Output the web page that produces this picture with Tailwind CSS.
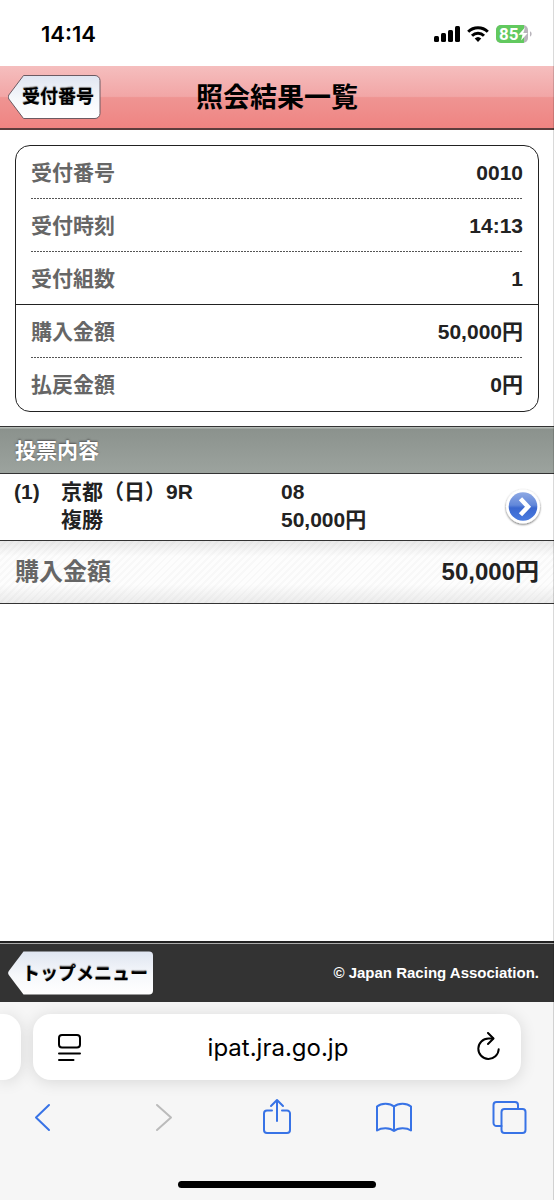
<!DOCTYPE html>
<html lang="ja">
<head>
<meta charset="utf-8">
<meta name="viewport" content="width=device-width, initial-scale=1">
<title>照会結果一覧</title>
<script src="https://cdn.jsdelivr.net/npm/@tailwindcss/browser@4"></script>
</head>
<body class="min-h-screen flex flex-col bg-white text-[#222] font-bold font-['Liberation_Sans','Noto_Sans_CJK_JP',sans-serif]">

<!-- Hairline down the right edge of the window -->
<div class="fixed inset-y-0 right-0 z-10 w-px bg-black/15"></div>

<!-- Status bar -->
<div class="h-[66px] shrink-0 flex items-center justify-between pl-[41px] pr-[22px] pt-[2px] text-black font-['Inter',sans-serif]">
  <time class="text-[22px] leading-none font-semibold">14:14</time>
  <div class="flex items-center gap-[7px]">
    <svg class="w-[26px] h-4" viewBox="0 0 26 16" role="img" aria-label="電波"><rect x="0" y="10" width="5" height="6" rx="1.5"/><rect x="7" y="7" width="5" height="9" rx="1.5"/><rect x="14" y="4" width="5" height="12" rx="1.5"/><rect x="21" y="0" width="5" height="16" rx="1.5"/></svg>
    <svg class="w-[22px] h-4" viewBox="0 0 22 16" role="img" aria-label="Wi-Fi"><g fill="none" stroke="#000" stroke-width="3"><path d="M1.2 5.7a14 14 0 0 1 19.6 0"/><path d="M5 9.8a8.6 8.6 0 0 1 12 0"/></g><path d="M11 16l-3.3-3.4a4.8 4.8 0 0 1 6.6 0z"/></svg>
    <svg class="w-9 h-[18px]" viewBox="0 0 36 18" role="img" aria-label="バッテリー 85%"><defs><clipPath id="cell"><rect width="32" height="18" rx="5"/></clipPath></defs><g clip-path="url(#cell)"><rect width="32" height="18" fill="#b9b5bc"/><rect width="28" height="18" fill="#62c95f"/></g><path d="M34 6.3a3 3 0 0 1 0 5.4z" fill="#b9b5bc"/><text class="font-['Roboto',sans-serif]" x="3" y="14.8" font-size="17" font-weight="700" fill="#fff">85</text><path d="M29 2.500L22.500 9.800h4l-1.400 5.700 6.600-7.600h-4.200z" fill="#fff"/></svg>
  </div>
</div>

<!-- Title bar -->
<header class="relative h-16 shrink-0 flex items-center px-2 border-b-2 border-[#5c3d3d] bg-[linear-gradient(#f5bebe_0%,#f2a6a6_49%,#ef9492_51%,#ef8482_100%)]">
  <button type="button" class="relative w-[93px] h-11 pl-[14px] pr-2 text-lg leading-none text-black whitespace-nowrap [text-shadow:0_-1px_1px_#777]">
    <svg class="absolute inset-0 w-full h-full" viewBox="0 0 93 44" aria-hidden="true"><defs><linearGradient id="tagA" x2="0" y2="1"><stop stop-color="#dfe5f1"/><stop offset=".55" stop-color="#f6f8fb"/><stop offset="1" stop-color="#fff"/></linearGradient></defs><path d="M15.500 .5H87a5 5 0 0 1 5 5V38.500a5 5 0 0 1-5 5H15.500L.8 24q-1.300-2 0-4z" fill="url(#tagA)" stroke="#6b5a62"/></svg>
    <span class="relative">受付番号</span>
  </button>
  <h1 class="absolute inset-x-0 pt-[2px] text-center text-[27px] leading-none text-black pointer-events-none">照会結果一覧</h1>
</header>

<main class="flex-1">
  <!-- Receipt summary -->
  <dl class="mx-[15px] mt-[15px] border border-[#222] rounded-[15px] text-[21px] leading-none [&_dt]:text-[#666]">
    <div class="mx-[15px] h-[53px] flex items-center justify-between bg-[repeating-linear-gradient(90deg,#555_0_2px,#fff_2px_3px)] bg-[length:100%_1px] bg-bottom bg-no-repeat"><dt>受付番号</dt><dd>0010</dd></div>
    <div class="mx-[15px] h-[53px] flex items-center justify-between bg-[repeating-linear-gradient(90deg,#555_0_2px,#fff_2px_3px)] bg-[length:100%_1px] bg-bottom bg-no-repeat"><dt>受付時刻</dt><dd>14:13</dd></div>
    <div class="px-[15px] h-[53px] flex items-center justify-between border-b border-[#222]"><dt>受付組数</dt><dd>1</dd></div>
    <div class="mx-[15px] h-[53px] flex items-center justify-between bg-[repeating-linear-gradient(90deg,#555_0_2px,#fff_2px_3px)] bg-[length:100%_1px] bg-bottom bg-no-repeat"><dt>購入金額</dt><dd>50,000円</dd></div>
    <div class="px-[15px] h-[53px] flex items-center justify-between"><dt>払戻金額</dt><dd>0円</dd></div>
  </dl>

  <!-- Bets -->
  <h2 class="mt-[14px] h-12 flex items-center px-[15px] border-y border-[#333] bg-[linear-gradient(#b4bab5_0_1px,#8b928d_2px,#9ca39e_100%)] text-[21px] leading-none text-white [text-shadow:0_-1px_2px_#555]">投票内容</h2>
  <div class="h-[66px] flex items-center pl-[14px] pr-[13px] text-[21px] leading-7">
    <div class="self-start pt-1 w-[47px] shrink-0">(1)</div>
    <div class="self-start pt-1 w-[220px] shrink-0">京都（日）9R<br>複勝</div>
    <div class="self-start pt-1 flex-1">08<br>50,000円</div>
    <button type="button" aria-label="詳細" class="size-9 shrink-0">
      <svg class="size-full overflow-visible" viewBox="0 0 36 36" aria-hidden="true"><defs><linearGradient id="ball" x2="0" y2="1"><stop stop-color="#8fa9e4"/><stop offset=".45" stop-color="#6288da"/><stop offset=".55" stop-color="#3a67cf"/><stop offset="1" stop-color="#4a7be0"/></linearGradient><filter id="sh" x="-20%" y="-20%" width="140%" height="150%"><feDropShadow dx="0" dy="1" stdDeviation="1.300" flood-opacity=".6"/></filter></defs><circle cx="18" cy="17.500" r="17" fill="#fff" filter="url(#sh)"/><circle cx="18" cy="17.500" r="14.300" fill="url(#ball)"/><path d="M15.500 9.800l7.500 8-7.500 8" fill="none" stroke="#fff" stroke-width="4.500"/></svg>
    </button>
  </div>
  <div class="h-16 flex items-center justify-between px-[15px] border-y border-[#333] text-2xl leading-none bg-[linear-gradient(#00000014,#00000000_25%,#00000000_70%,#00000012),repeating-linear-gradient(135deg,#fdfdfd_0_3px,#f8f8f8_3px_5px)]">
    <span class="text-[#666]">購入金額</span><span>50,000円</span>
  </div>
</main>

<!-- Site footer -->
<footer class="h-[61px] shrink-0 flex items-center justify-between pl-2 pr-[15px] pt-[2px] bg-[linear-gradient(#222_0_2px,#aaa_2px_3px,#333_3px)]">
  <button type="button" class="relative w-[146px] h-11 pl-[14px] pr-2 pt-[2px] text-lg leading-none text-black whitespace-nowrap [text-shadow:0_-1px_1px_#777]">
    <svg class="absolute inset-0 w-full h-full" viewBox="0 0 146 44" aria-hidden="true"><path d="M15.500 .5H141a4 4 0 0 1 4 4V39.500a4 4 0 0 1-4 4H15.500L.8 24q-1.300-2 0-4z" fill="url(#tagA)"/></svg>
    <span class="relative">トップメニュー</span>
  </button>
  <small class="text-[15px] leading-none text-white">© Japan Racing Association.</small>
</footer>

<!-- Browser chrome -->
<div class="h-[198px] shrink-0 flex flex-col bg-[#f6f6f6] overflow-hidden font-normal text-black font-['Inter',sans-serif]">
  <div class="mt-3 flex gap-3 pr-[33px]">
    <div class="w-[21px] h-[66px] shrink-0 rounded-r-[18px] bg-white shadow-[0_2px_16px_#00000020]"></div>
    <div class="flex-1 h-[66px] flex items-center justify-between px-6 rounded-[18px] bg-white shadow-[0_2px_16px_#00000020]">
      <button type="button" aria-label="ページ設定"><svg class="w-6 h-[30px]" viewBox="0 0 24 30" fill="none" stroke="#000" stroke-width="2" stroke-linecap="round"><rect x="2" y="3" width="21" height="12.500" rx="3"/><path d="M2 21.500h21M2 28h14.500"/></svg></button>
      <a href="#" class="pt-[2px] text-2xl leading-none">ipat.jra.go.jp</a>
      <button type="button" aria-label="再読み込み" class="-mr-1"><svg class="w-[26px] h-[30px]" viewBox="0 0 26 30" fill="none" stroke="#000" stroke-width="2" stroke-linecap="round" stroke-linejoin="round"><path d="M23.700 17.200A10.200 10.200 0 1 1 13.500 6.500h4.500"/><path d="M13 1l5.500 5.500-5.500 5.500"/></svg></button>
    </div>
  </div>
  <nav class="mt-[18px] px-[26px] flex items-center justify-between text-[#3873e6]" aria-label="ツールバー">
    <button type="button" aria-label="戻る"><svg class="w-9 h-[38px]" viewBox="0 0 36 38" fill="none" stroke="currentColor" stroke-width="2" stroke-linecap="round" stroke-linejoin="round"><path d="M23 7L10 19.500 23 32"/></svg></button>
    <button type="button" aria-label="進む" class="text-[#bbb]"><svg class="w-9 h-[38px]" viewBox="0 0 36 38" fill="none" stroke="currentColor" stroke-width="2" stroke-linecap="round" stroke-linejoin="round"><path d="M14 7l14 12.500L14 32"/></svg></button>
    <button type="button" aria-label="共有"><svg class="w-9 h-[38px]" viewBox="0 0 36 38" fill="none" stroke="currentColor" stroke-width="2" stroke-linecap="round" stroke-linejoin="round"><path d="M13 12.500H8a3 3 0 0 0-3 3V32a3 3 0 0 0 3 3H28a3 3 0 0 0 3-3V15.500a3 3 0 0 0-3-3h-5M18 23V2.500M12 8l6-6 6 6"/></svg></button>
    <button type="button" aria-label="ブックマーク"><svg class="w-9 h-[38px]" viewBox="0 0 36 38" fill="none" stroke="currentColor" stroke-width="2" stroke-linecap="round" stroke-linejoin="round"><path d="M18 8.500V33M18 8.500C14 5 5.500 4.500 1 8.500V32.500C5.500 29.500 14 29.500 18 33 22 29.500 30.500 29.500 35 32.500V8.500C30.500 4.500 22 5 18 8.500z"/></svg></button>
    <button type="button" aria-label="タブ一覧"><svg class="w-9 h-[38px]" viewBox="0 0 36 38" fill="none" stroke="currentColor" stroke-width="2" stroke-linecap="round" stroke-linejoin="round"><rect x="9.500" y="11" width="24" height="24" rx="3"/><path d="M9.500 28H4.500a3 3 0 0 1-3-3V7a3 3 0 0 1 3-3H23a3 3 0 0 1 3 3v4"/></svg></button>
  </nav>
  <div class="mt-auto mb-3 mx-auto w-[198px] h-[7px] rounded-full bg-black"></div>
</div>
</body>
</html>
